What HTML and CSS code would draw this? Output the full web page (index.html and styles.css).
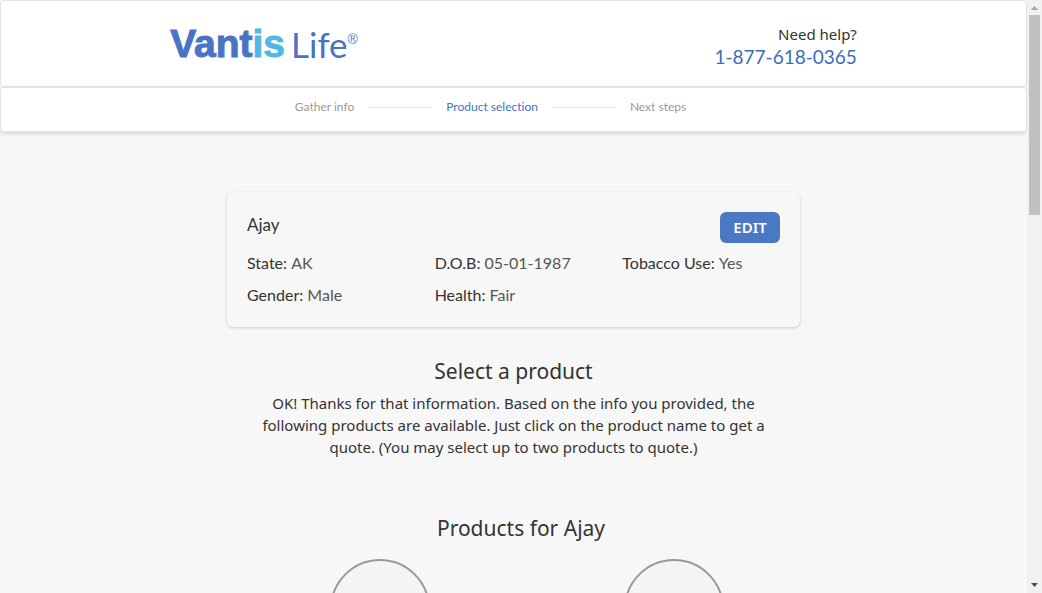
FILE: index.html
```html
<!DOCTYPE html>
<html lang="en">
<head>
<meta charset="utf-8">
<meta name="viewport" content="width=device-width, initial-scale=1">
<title>Vantis Life - Product selection</title>
<link rel="stylesheet" href="styles.css">
</head>
<body>
<div class="page">
  <header class="panel masthead">
    <div class="masthead-inner">
      <div class="logo" aria-label="Vantis Life"><span class="logo-name">Vant<span class="logo-accent">is</span></span><span class="logo-life">Life</span><span class="logo-mark">®</span></div>
      <div class="help">
        <span class="help-label">Need help?</span>
        <a class="help-phone" href="tel:18776180365">1-877-618-0365</a>
      </div>
    </div>
  </header>
  <nav class="panel progress" aria-label="Progress">
    <ol class="steps">
      <li class="step">Gather info</li>
      <li class="step-line" aria-hidden="true"></li>
      <li class="step step-active" aria-current="step">Product selection</li>
      <li class="step-line" aria-hidden="true"></li>
      <li class="step">Next steps</li>
    </ol>
  </nav>
  <main class="content">
    <section class="card">
      <div class="card-head">
        <h2 class="card-name">Ajay</h2>
        <button class="edit" type="button">EDIT</button>
      </div>
      <dl class="facts">
        <div class="fact"><dt>State:</dt> <dd>AK</dd></div>
        <div class="fact"><dt>D.O.B:</dt> <dd>05-01-1987</dd></div>
        <div class="fact"><dt>Tobacco Use:</dt> <dd>Yes</dd></div>
        <div class="fact"><dt>Gender:</dt> <dd>Male</dd></div>
        <div class="fact"><dt>Health:</dt> <dd>Fair</dd></div>
      </dl>
    </section>
    <section class="intro">
      <h1 class="title">Select a product</h1>
      <p class="lead">OK! Thanks for that information. Based on the info you provided, the following products are available. Just click on the product name to get a quote. (You may select up to two products to quote.)</p>
    </section>
    <section class="products">
      <h2 class="title products-title">Products for Ajay</h2>
      <div class="product-list">
        <div class="product"></div>
        <div class="product"></div>
      </div>
    </section>
  </main>
</div>
<div class="scrollbar" aria-hidden="true">
  <svg class="arrow" viewBox="0 0 15 15"><path d="M4 10h7L7.500 6z" fill="#a3a3a3"/></svg>
  <div class="thumb"></div>
  <svg class="arrow arrow-down" viewBox="0 0 15 15"><path d="M4 5h7L7.500 9z" fill="#505050"/></svg>
</div>
</body>
</html>
```
FILE: styles.css
```css
* { box-sizing: border-box; }

body {
  display: flex;
  height: 100vh;
  margin: 0;
  overflow: hidden;
  background: #f7f7f7;
  color: #333;
  font-family: "Noto Sans", "Open Sans", sans-serif;
  font-size: 15px;
  font-variant-ligatures: none;
  line-height: 22px;
}

h1, h2, p, dl, dd, ol { margin: 0; padding: 0; font-weight: 400; }

.page { flex: 1; min-width: 0; overflow: hidden; }

.panel {
  border: 1px solid #e3e3e3;
  border-radius: 4px;
  background: #fff;
}

.masthead { padding: 23px 0 17px; }

.masthead-inner {
  display: flex;
  justify-content: space-between;
  align-items: flex-start;
  width: 67%;
  margin: 0 auto;
}

.logo {
  display: flex;
  align-items: flex-start;
  color: #4a73c4;
  line-height: 40px;
}
.logo-name {
  font: 700 39px/40px "Liberation Sans", sans-serif;
  -webkit-text-stroke: 1px;
}
.logo-accent { color: #50b8e2; }
.logo-life {
  margin-left: 6px;
  font: 400 35px/40px Lato, sans-serif;
}
.logo-mark { font: 400 14px/30px "Liberation Sans", sans-serif; }

.help {
  display: flex;
  flex-direction: column;
  align-items: flex-end;
}
.help-label { line-height: 20px; }
.help-phone {
  color: #3a6dc0;
  font-family: Lato, sans-serif;
  font-size: 19px;
  line-height: 25px;
  text-decoration: none;
}

.progress {
  padding: 8px 0 13px;
  box-shadow: 0 2px 4px rgba(0, 0, 0, .12);
}
.steps {
  display: flex;
  justify-content: center;
  align-items: center;
  gap: 14px;
  margin-right: 46px;
  list-style: none;
  color: #999;
  font-family: Lato, sans-serif;
  font-size: 12px;
}
.step-active { color: #4472c4; }
.step-line { width: 64px; height: 1px; background: #e3e3e3; }

.content { padding: 60px 0 0; }

.card {
  width: 573px;
  max-width: 100%;
  margin: 0 auto;
  padding: 20px 20px 16px;
  border-radius: 6px;
  box-shadow: 0 1px 3px rgba(0, 0, 0, .2);
}
.card-head {
  display: flex;
  justify-content: space-between;
  align-items: flex-start;
}
.card-name {
  font-family: Lato, sans-serif;
  font-size: 17px;
  line-height: 26px;
}
.edit {
  width: 60px;
  height: 31px;
  padding: 0 0 2px;
  border: 0;
  border-radius: 6px;
  background: #4a78c2;
  color: #fff;
  font-family: inherit;
  font-size: 15px;
  font-weight: 600;
}
.facts {
  display: grid;
  grid-template-columns: repeat(3, 1fr);
  column-gap: 30px;
  margin-top: 4px;
  font-family: Lato, sans-serif;
  font-size: 16px;
  line-height: 32px;
}
.fact { white-space: nowrap; }
.fact dt, .fact dd { display: inline; }
.fact dd { color: #555; }

.intro {
  width: 530px;
  max-width: 100%;
  margin: 29px auto 0;
  text-align: center;
}
.title { font-size: 21px; line-height: 30px; }
.lead { margin-top: 6px; }

.products { margin-top: 55px; text-align: center; }
.products-title { margin-left: 15px; }
.product-list {
  display: flex;
  justify-content: center;
  gap: 194px;
  margin: 16px 0 0 26px;
}
.product {
  width: 100px;
  height: 100px;
  border: 2px solid #999;
  border-radius: 50%;
  background: #f4f4f4;
}

.scrollbar {
  display: flex;
  flex-direction: column;
  width: 15px;
  background: #f1f1f1;
}
.arrow { width: 15px; height: 15px; }
.arrow-down { margin-top: auto; }
.thumb { height: 200px; margin: 0 2px; background: #c1c1c1; }
```
